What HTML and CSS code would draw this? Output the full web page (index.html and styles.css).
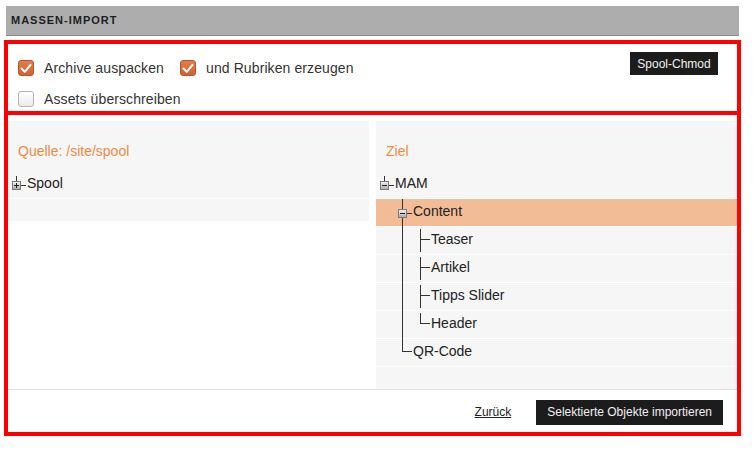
FILE: index.html
```html
<!DOCTYPE html>
<html lang="de">
<head>
<meta charset="utf-8">
<title>Massen-Import</title>
<link rel="stylesheet" href="styles.css">
</head>
<body>
<div class="page">
  <div class="header">MASSEN-IMPORT</div>

  <section class="box options">
    <div class="opt-rows">
      <div class="opt-row">
        <label class="check"><span class="cb on"><svg width="14" height="14" viewBox="0 0 14 14"><polyline points="2.5,7.5 5.8,10.8 11.5,3.8" fill="none" stroke="#fff" stroke-width="2" stroke-linecap="round" stroke-linejoin="round"/></svg></span>Archive auspacken</label>
        <label class="check"><span class="cb on"><svg width="14" height="14" viewBox="0 0 14 14"><polyline points="2.5,7.5 5.8,10.8 11.5,3.8" fill="none" stroke="#fff" stroke-width="2" stroke-linecap="round" stroke-linejoin="round"/></svg></span>und Rubriken erzeugen</label>
      </div>
      <div class="opt-row">
        <label class="check"><span class="cb"></span>Assets überschreiben</label>
      </div>
    </div>
    <button class="dark-btn chmod">Spool-Chmod</button>
  </section>

  <section class="box main">
    <div class="panels">
      <div class="panel">
        <div class="panel-title">Quelle: /site/spool</div>
        <div class="tree">
          <div class="row">
            <svg class="cell" width="18" height="28" viewBox="0 0 18 28"><defs><linearGradient id="g1" x1="0" y1="0" x2="0" y2="1"><stop offset="0" stop-color="#f4f4f4"/><stop offset="1" stop-color="#a9a9a9"/></linearGradient></defs><line x1="8.5" y1="5" x2="8.5" y2="10" stroke="#333"/><line x1="13" y1="14.5" x2="18" y2="14.5" stroke="#333"/><rect x="4.5" y="10.5" width="8" height="8" fill="url(#g1)" stroke="#7a7a7a"/><line x1="6" y1="14.5" x2="11" y2="14.5" stroke="#222"/><line x1="8.5" y1="12" x2="8.5" y2="17" stroke="#222"/></svg>
            <span class="label">Spool</span>
          </div>
          <div class="row-empty"></div>
        </div>
      </div>

      <div class="panel">
        <div class="panel-title">Ziel</div>
        <div class="tree">
          <div class="row">
            <svg class="cell" width="18" height="28" viewBox="0 0 18 28"><defs><linearGradient id="g2" x1="0" y1="0" x2="0" y2="1"><stop offset="0" stop-color="#f4f4f4"/><stop offset="1" stop-color="#a9a9a9"/></linearGradient></defs><line x1="8.5" y1="5" x2="8.5" y2="10" stroke="#333"/><line x1="13" y1="14.5" x2="18" y2="14.5" stroke="#333"/><rect x="4.5" y="10.5" width="8" height="8" fill="url(#g2)" stroke="#7a7a7a"/><line x1="6" y1="14.5" x2="11" y2="14.5" stroke="#222"/></svg>
            <span class="label">MAM</span>
          </div>
          <div class="row selected">
            <span class="cell-blank"></span>
            <svg class="cell" width="18" height="28" viewBox="0 0 18 28"><defs><linearGradient id="g3" x1="0" y1="0" x2="0" y2="1"><stop offset="0" stop-color="#f4f4f4"/><stop offset="1" stop-color="#a9a9a9"/></linearGradient></defs><line x1="8.5" y1="0" x2="8.5" y2="28" stroke="#333"/><line x1="13" y1="14.5" x2="18" y2="14.5" stroke="#333"/><rect x="4.5" y="10.5" width="8" height="8" fill="url(#g3)" stroke="#7a7a7a"/><line x1="6" y1="14.5" x2="11" y2="14.5" stroke="#222"/></svg>
            <span class="label">Content</span>
          </div>
          <div class="row">
            <span class="cell-blank"></span>
            <svg class="cell" width="18" height="28" viewBox="0 0 18 28"><line x1="8.5" y1="0" x2="8.5" y2="28" stroke="#333"/></svg>
            <svg class="cell" width="18" height="28" viewBox="0 0 18 28"><line x1="8.5" y1="2" x2="8.5" y2="25" stroke="#333"/><line x1="9" y1="12.5" x2="18" y2="12.5" stroke="#333"/></svg>
            <span class="label">Teaser</span>
          </div>
          <div class="row">
            <span class="cell-blank"></span>
            <svg class="cell" width="18" height="28" viewBox="0 0 18 28"><line x1="8.5" y1="0" x2="8.5" y2="28" stroke="#333"/></svg>
            <svg class="cell" width="18" height="28" viewBox="0 0 18 28"><line x1="8.5" y1="2" x2="8.5" y2="25" stroke="#333"/><line x1="9" y1="12.5" x2="18" y2="12.5" stroke="#333"/></svg>
            <span class="label">Artikel</span>
          </div>
          <div class="row">
            <span class="cell-blank"></span>
            <svg class="cell" width="18" height="28" viewBox="0 0 18 28"><line x1="8.5" y1="0" x2="8.5" y2="28" stroke="#333"/></svg>
            <svg class="cell" width="18" height="28" viewBox="0 0 18 28"><line x1="8.5" y1="2" x2="8.5" y2="25" stroke="#333"/><line x1="9" y1="12.5" x2="18" y2="12.5" stroke="#333"/></svg>
            <span class="label">Tipps Slider</span>
          </div>
          <div class="row">
            <span class="cell-blank"></span>
            <svg class="cell" width="18" height="28" viewBox="0 0 18 28"><line x1="8.5" y1="0" x2="8.5" y2="28" stroke="#333"/></svg>
            <svg class="cell" width="18" height="28" viewBox="0 0 18 28"><line x1="8.5" y1="2" x2="8.5" y2="13" stroke="#333"/><line x1="9" y1="12.5" x2="18" y2="12.5" stroke="#333"/></svg>
            <span class="label">Header</span>
          </div>
          <div class="row">
            <span class="cell-blank"></span>
            <svg class="cell" width="18" height="28" viewBox="0 0 18 28"><line x1="8.5" y1="0" x2="8.5" y2="13" stroke="#333"/><line x1="9" y1="12.5" x2="18" y2="12.5" stroke="#333"/></svg>
            <span class="label">QR-Code</span>
          </div>
          <div class="row-empty"></div>
        </div>
      </div>
    </div>

    <div class="footer">
      <a class="back" href="#">Zurück</a>
      <button class="dark-btn import">Selektierte Objekte importieren</button>
    </div>
  </section>
</div>
</body>
</html>
```

FILE: styles.css
```css
* { box-sizing: border-box; }

html, body {
  margin: 0;
  background: #fff;
}

body {
  font-family: "Liberation Sans", Arial, sans-serif;
  color: #333;
}

.page {
  width: 737px;
  margin-left: 4px;
  padding-top: 6px;
}

.header {
  margin: 0 2px;
  height: 30px;
  background: #adadad;
  border-bottom: 1px solid #8a8a8a;
  padding-left: 5px;
  font-size: 11px;
  font-weight: bold;
  letter-spacing: 1px;
  line-height: 29px;
  color: #1e1e1e;
}

.box {
  border: 4px solid #ff0000;
}

/* options */
.options {
  margin-top: 4px;
  height: 75px;
  display: flex;
  justify-content: space-between;
  align-items: flex-start;
  padding: 0 19px 0 10px;
}

.opt-rows {
  padding-top: 12px;
  display: flex;
  flex-direction: column;
  gap: 7px;
}

.opt-row {
  display: flex;
  align-items: center;
  height: 24px;
}

.check {
  display: flex;
  align-items: center;
  font-size: 14px;
  letter-spacing: 0.1px;
  color: #333;
}

.check + .check {
  margin-left: 16px;
}

.cb {
  width: 16px;
  height: 16px;
  margin-right: 10px;
  border-radius: 3px;
  border: 1px solid #b3b3b3;
  background: linear-gradient(#ffffff, #ebebeb);
  display: flex;
  align-items: center;
  justify-content: center;
}

.cb.on {
  border-color: #b8552b;
  background: linear-gradient(#e07d4c, #cf6333);
}

.dark-btn {
  border: 0;
  border-radius: 0;
  background: #1c1c1c;
  color: #f0f0f0;
  font-family: "Liberation Sans", Arial, sans-serif;
  font-size: 12px;
  height: 25px;
  padding: 0 11px;
  cursor: pointer;
}

.chmod {
  margin-top: 8px;
  height: 23px;
  width: 88px;
  padding: 0;
}

/* main */
.main {
  margin-top: -4px;
  height: 325px;
  padding-top: 6px;
  display: flex;
  flex-direction: column;
}

.panels {
  display: flex;
  gap: 7px;
  align-items: flex-start;
  height: 268px;
}

.panel {
  flex: 1;
  background: #f6f6f6;
}

.panel-title {
  padding: 21px 10px 11px;
  line-height: 18px;
  font-size: 14px;
  color: #ef8a43;
}

.row {
  height: 28px;
  display: flex;
  align-items: flex-start;
  box-shadow: inset 0 -1px 0 #ffffff;
  font-size: 14px;
  color: #222;
}

.row.selected {
  background: #f2bc96;
}

.cell {
  display: block;
  flex-shrink: 0;
}

.cell-blank {
  width: 18px;
  flex-shrink: 0;
}

.label {
  line-height: 24px;
  margin-left: 1px;
}

.row-empty {
  height: 22px;
}

.footer {
  flex: 1;
  border-top: 1px solid #e0e0e0;
  display: flex;
  justify-content: flex-end;
  align-items: center;
  padding: 2px 14px 0 0;
}

.back {
  font-size: 12px;
  color: #222;
  text-decoration: underline;
  margin-right: 25px;
}
```
